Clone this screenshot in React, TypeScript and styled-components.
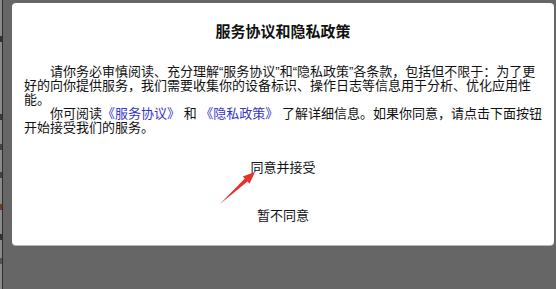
import React from 'react';
import styled, { createGlobalStyle } from 'styled-components';

const GlobalStyle = createGlobalStyle`
  html, body {
    margin: 0;
    padding: 0;
    background: #666;
  }
  #root {
    height: 289px;
    overflow: hidden;
  }
`;

const Screen = styled.div`
  display: flex;
  height: 289px;
  background: #666;
  font-family: "Liberation Sans", "Noto Sans CJK SC", sans-serif;
`;

const PageEdge = styled.div`
  width: 2px;
  background: #8a8a8a;
  display: flex;
  flex-direction: column;
`;

const EdgeMark = styled.span<{ $top: number; $color: string }>`
  display: block;
  height: 6px;
  margin-top: ${(p) => p.$top}px;
  background: ${(p) => p.$color};
`;

const EdgeLine = styled.div`
  width: 1px;
  background: #2e2e2e;
`;

const Overlay = styled.div`
  flex: 1;
  padding: 3px 0 0 9px;
`;

const Modal = styled.div`
  position: relative;
  box-sizing: border-box;
  width: 542px;
  height: 242px;
  background: #fff;
  border-radius: 4px;
  box-shadow: 0 1px 0 #b4b4b4;
  padding: 19px 12px 7px;
  display: flex;
  flex-direction: column;
`;

const Title = styled.h1`
  margin: 0;
  font-size: 15px;
  line-height: 20px;
  font-weight: bold;
  text-align: center;
  color: #111;
`;

const Body = styled.div`
  margin-top: 23px;
  font-size: 13px;
  line-height: 14px;
  color: #111;
`;

const Para = styled.p`
  margin: 0;
  text-indent: 26px;
`;

const Link = styled.span`
  color: #3535c8;
`;

const Actions = styled.div`
  margin-top: 7px;
  display: flex;
  flex-direction: column;
`;

const ActionButton = styled.button`
  height: 48px;
  border: none;
  background: transparent;
  padding: 0;
  font-family: inherit;
  font-size: 13px;
  color: #111;
  text-align: center;
  cursor: pointer;
`;

const Pointer = styled.svg`
  position: absolute;
  left: 205px;
  top: 165px;
  width: 45px;
  height: 42px;
`;

const edgeMarks = [
  { top: 36, color: '#333' },
  { top: 72, color: '#3a3a3a' },
  { top: 24, color: '#444' },
  { top: 22, color: '#444' },
  { top: 26, color: '#7a3a2a' },
  { top: 24, color: '#333' },
  { top: 18, color: '#555' },
];

export default function App() {
  return (
    <>
      <GlobalStyle />
      <Screen>
        <PageEdge>
          {edgeMarks.map((m, i) => (
            <EdgeMark key={i} $top={m.top} $color={m.color} />
          ))}
        </PageEdge>
        <EdgeLine />
        <Overlay>
          <Modal>
            <Title>服务协议和隐私政策</Title>
            <Body>
              <Para>
                请你务必审慎阅读、充分理解“服务协议”和“隐私政策”各条款，包括但不限于：为了更好的向你提供服务，我们需要收集你的设备标识、操作日志等信息用于分析、优化应用性能。
              </Para>
              <Para>
                你可阅读<Link>《服务协议》</Link> 和 <Link>《隐私政策》</Link> 了解详细信息。如果你同意，请点击下面按钮开始接受我们的服务。
              </Para>
            </Body>
            <Actions>
              <ActionButton>同意并接受</ActionButton>
              <ActionButton>暂不同意</ActionButton>
            </Actions>
            <Pointer viewBox="0 0 45 42">
              <polygon
                points="3,36 30.5,13.6 32.5,15.8 38,4 25.7,8.4 27.8,10.6"
                fill="#e8302c"
              />
            </Pointer>
          </Modal>
        </Overlay>
      </Screen>
    </>
  );
}
